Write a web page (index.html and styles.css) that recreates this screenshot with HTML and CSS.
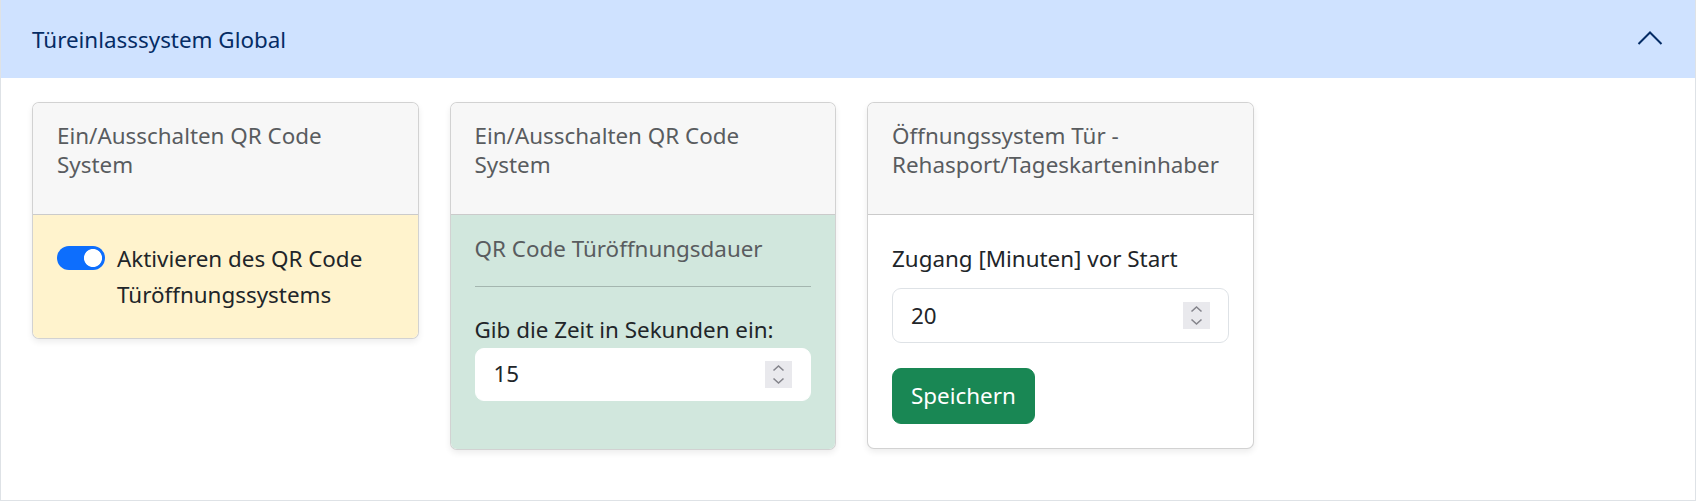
FILE: index.html
```html
<!DOCTYPE html>
<html lang="de">
<head>
<meta charset="utf-8">
<title>Türeinlasssystem Global</title>
<link rel="stylesheet" href="styles.css">
</head>
<body>
<div class="accordion">
  <div class="acc-header">
    <span class="acc-title">Türeinlasssystem Global</span>
    <svg class="acc-chevron" width="26" height="16" viewBox="0 0 26 16" aria-hidden="true">
      <path d="M1.5 14 L13 2.5 L24.5 14" fill="none" stroke="#052c65" stroke-width="2"/>
    </svg>
  </div>
  <div class="acc-body">
    <div class="cards">
      <div class="card">
        <div class="card-header">Ein/Ausschalten QR Code System</div>
        <div class="card-body body-warning">
          <label class="switch-row">
            <input type="checkbox" class="switch" checked>
            <span class="switch-label">Aktivieren des QR Code Türöffnungssystems</span>
          </label>
        </div>
      </div>

      <div class="card">
        <div class="card-header">Ein/Ausschalten QR Code System</div>
        <div class="card-body body-success compact">
          <div class="card-title">QR Code Türöffnungsdauer</div>
          <hr class="divider">
          <label class="form-label flush" for="dauer">Gib die Zeit in Sekunden ein:</label>
          <div class="num-field plain">
            <input id="dauer" class="num-input" type="number" value="15">
            <span class="spinner"><svg width="27" height="27" viewBox="0 0 27 27" aria-hidden="true"><path d="M8.5 9.5 L13.5 5 L18.5 9.5 M8.5 17.5 L13.5 22 L18.5 17.5" fill="none" stroke="#85858c" stroke-width="1.6"/></svg></span>
          </div>
        </div>
      </div>

      <div class="card">
        <div class="card-header">Öffnungssystem Tür - Rehasport/Tageskarteninhaber</div>
        <div class="card-body">
          <label class="form-label" for="zugang">Zugang [Minuten] vor Start</label>
          <div class="num-field">
            <input id="zugang" class="num-input" type="number" value="20">
            <span class="spinner"><svg width="27" height="27" viewBox="0 0 27 27" aria-hidden="true"><path d="M8.5 9.5 L13.5 5 L18.5 9.5 M8.5 17.5 L13.5 22 L18.5 17.5" fill="none" stroke="#85858c" stroke-width="1.6"/></svg></span>
          </div>
          <button class="btn-save" type="button">Speichern</button>
        </div>
      </div>
    </div>
  </div>
</div>
</body>
</html>
```
FILE: styles.css
```css
* { box-sizing: border-box; }

html, body {
  margin: 0;
  padding: 0;
  background: #ffffff;
}

body {
  font-family: "Noto Sans", "Open Sans", sans-serif;
  font-size: 22.4px;
  line-height: 36px;
  color: #212529;
  width: 1696px;
  height: 501px;
  overflow: hidden;
}

.accordion {
  border: 1px solid #dee2e6;
  border-top: 0;
  height: 501px;
}

.acc-header {
  height: 78px;
  background: #cfe2ff;
  color: #052c65;
  display: flex;
  align-items: center;
  justify-content: space-between;
  padding: 2px 32px 0 31px;
}

.acc-title {
  line-height: 28.8px;
}

.acc-chevron {
  display: block;
  margin-top: -4px;
}

.acc-body {
  padding: 24px 31px 49px 31px;
}

.cards {
  display: flex;
  align-items: flex-start;
  gap: 31px;
}

.card {
  width: 386.5px;
  border: 1px solid rgba(0, 0, 0, 0.175);
  border-radius: 7px;
  background: #ffffff;
  box-shadow: 0 3px 6px rgba(0, 0, 0, 0.075);
  overflow: hidden;
}

.card-header {
  background: #f7f7f7;
  color: #595c5f;
  line-height: 28.8px;
  padding: 19px 24px 34.4px 24px;
  border-bottom: 1px solid rgba(0, 0, 0, 0.175);
}

.card-body {
  padding: 26px 24px 24px 24px;
}

.card-body.compact {
  padding-top: 19.6px;
}

.body-warning {
  background: #fff3cd;
  padding-bottom: 25px;
}

.body-success {
  background: #d1e7dd;
}

.switch-row {
  display: flex;
  align-items: flex-start;
  gap: 12px;
}

.switch {
  appearance: none;
  -webkit-appearance: none;
  flex: none;
  width: 48px;
  height: 24px;
  margin: 5px 0 0 0;
  border-radius: 12px;
  background: radial-gradient(circle at calc(100% - 12px) 50%, #ffffff 8.6px, rgba(255, 255, 255, 0) 9.4px), #0d6efd;
  border: 0;
}

.card-title {
  color: #595c5f;
  line-height: 28.8px;
}

.divider {
  border: 0;
  border-top: 1px solid rgba(33, 37, 41, 0.25);
  margin: 22.6px 0 24.7px 0;
  height: 0;
}

.form-label {
  display: block;
  margin-bottom: 11.4px;
}

.form-label.flush {
  margin-bottom: 0;
}

.num-field {
  display: flex;
  align-items: center;
  height: 54.6px;
  padding: 0 18px 0 18px;
  border: 1px solid #dee2e6;
  border-radius: 9px;
  background: #ffffff;
  margin-bottom: 24.7px;
}

.num-field.plain {
  height: 53.4px;
  border-color: #ffffff;
  margin-bottom: 24.3px;
}

.num-input {
  flex: 1;
  min-width: 0;
  border: 0;
  outline: 0;
  padding: 0;
  background: transparent;
  font: inherit;
  line-height: 36px;
  color: #212529;
  -moz-appearance: textfield;
}

.num-input::-webkit-inner-spin-button,
.num-input::-webkit-outer-spin-button {
  -webkit-appearance: none;
  margin: 0;
}

.spinner {
  flex: none;
  width: 27px;
  height: 27px;
  background: #e9e9ed;
  display: block;
}

.spinner svg {
  display: block;
}

.btn-save {
  display: inline-block;
  font: inherit;
  line-height: 36px;
  color: #ffffff;
  background: #198754;
  border: 1px solid #198754;
  border-radius: 9px;
  padding: 9px 18px;
  margin: 0;
}
```
